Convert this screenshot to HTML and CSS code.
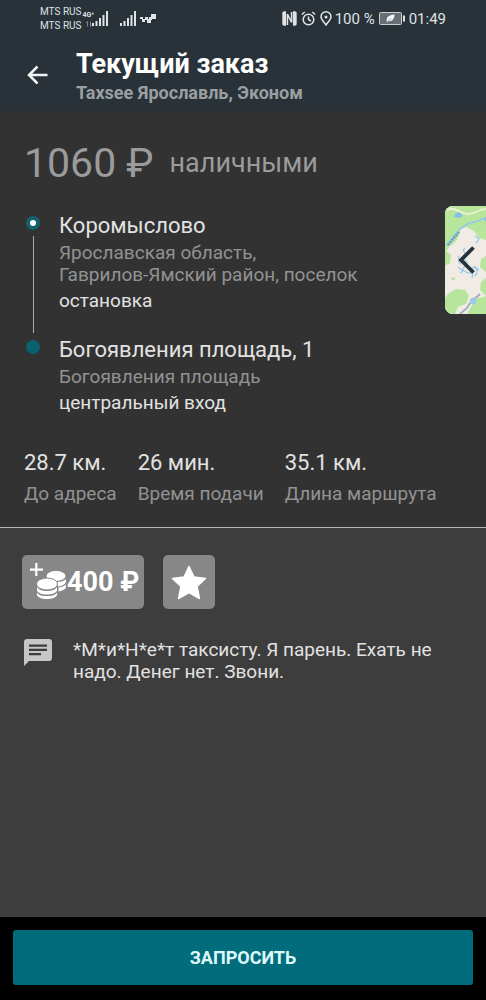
FILE: index.html
```html
<!DOCTYPE html>
<html lang="ru">
<head>
<meta charset="utf-8">
<meta name="viewport" content="width=device-width, initial-scale=1">
<title>Текущий заказ</title>
<link rel="stylesheet" href="styles.css">
</head>
<body>
<div class="app">
  <header class="topbar">
    <div class="status">
      <div class="carriers"><span>MTS RUS</span><span>MTS RUS</span></div>
      <div class="network"><span class="network-type">4G⁺</span>
        <svg class="updown" width="6" height="6" viewBox="0 0 6 6"><path d="M1.5 5.500V.5L.5 2M4.500 .5v5l1-1.500" fill="none" stroke="#7d868a"/></svg>
      </div>
      <svg class="signal" width="16" height="15" viewBox="0 0 16 15"><path d="M0 12h2v3H0zM3.500 10h2v5h-2zM7 7h2v8H7zM10.500 4h2v11h-2zM14 0h2v15h-2z" fill="#dfe3e4"/></svg>
      <svg class="signal signal-second" width="16" height="15" viewBox="0 0 16 15"><path d="M0 12h2v3H0zM3.500 10h2v5h-2zM7 7h2v8H7zM10.500 4h2v11h-2zM14 0h2v15h-2z" fill="#dfe3e4"/></svg>
      <svg class="checks" width="16" height="9" viewBox="0 0 16 9"><path d="M0 3h3v2H0zM2 5h3v3H2zM5 3h3v3H5zM7 5h4v4H7zM11 0h5v5h-5zM9 3h3v3H9z" fill="#dfe3e4"/></svg>
      <div class="status-right">
        <svg width="15" height="15" viewBox="0 0 15 15"><path d="M4 .3H2.500C.8.300.300 1 .300 2.500v10c0 1.500.5 2.200 2.200 2.200H4zM11 .3h1.500c1.700 0 2.200.7 2.200 2.200v10c0 1.500-.5 2.200-2.200 2.200H11z" fill="#dfe3e4"/><path d="M5.400 14V3l4.200 8.500V1" fill="none" stroke="#dfe3e4" stroke-width="1.600"/></svg>
        <svg width="15" height="15" viewBox="0 0 15 15" fill="none" stroke="#dfe3e4" stroke-width="1.500"><circle cx="7.500" cy="8.500" r="5.300"/><path d="M7.500 5.500v3l2.500 1.500M.8 3.500l3-2.500M14.200 3.500l-3-2.500"/></svg>
        <svg width="12" height="15" viewBox="0 0 12 15" fill="none" stroke="#dfe3e4" stroke-width="1.500"><path d="M6 14C3.500 10.500 1 8.500 1 5.800a5 5 0 0 1 10 0C11 8.500 8.500 10.500 6 14z"/><circle cx="6" cy="6" r="1.500" fill="#dfe3e4" stroke="none"/></svg>
        <span class="percent">100 %</span>
        <svg class="battery" width="26" height="13" viewBox="0 0 26 13"><rect x=".5" y=".5" width="22" height="12" rx="1" fill="#667074" stroke="#c9cfd1"/><path d="M24 3.500h2v6h-2z" fill="#dfe3e4"/><path d="M8 10.500C6.500 5.500 9.500 3 15.500 2.500 15.500 7 13 10 9.500 9z" fill="#f4f6f6"/><path d="M8 10.500l4-4" stroke="#667074" stroke-width=".6"/></svg>
        <span>01:49</span>
      </div>
    </div>
    <div class="titlebar">
      <button class="back" type="button" aria-label="Назад">
        <svg width="21" height="20" viewBox="0 0 21 20" fill="none" stroke="#f2f4f4" stroke-width="2.500"><path d="M20.500 10H2.500M10.500 1.500L2 10l8.500 8.500"/></svg>
      </button>
      <div>
        <h1 class="title">Текущий заказ</h1>
        <p class="subtitle">Taxsee Ярославль, Эконом</p>
      </div>
    </div>
  </header>

  <main class="main">
    <section class="details">
      <div class="price"><span class="amount">1060 ₽</span><span class="method">наличными</span></div>
      <ol class="route">
        <li class="stop">
          <div class="track"><span class="dot dot-start"></span><span class="line"></span></div>
          <div class="place">
            <h2 class="place-name">Коромыслово</h2>
            <p class="place-area">Ярославская область,<br>Гаврилов-Ямский район, поселок</p>
            <p class="place-note">остановка</p>
          </div>
        </li>
        <li class="stop">
          <div class="track"><span class="dot"></span></div>
          <div class="place">
            <h2 class="place-name">Богоявления площадь, 1</h2>
            <p class="place-area">Богоявления площадь</p>
            <p class="place-note">центральный вход</p>
          </div>
        </li>
      </ol>
      <dl class="stats">
        <div class="stat"><dt>До адреса</dt><dd>28.7 км.</dd></div>
        <div class="stat"><dt>Время подачи</dt><dd>26 мин.</dd></div>
        <div class="stat"><dt>Длина маршрута</dt><dd>35.1 км.</dd></div>
      </dl>
      <button class="map-tab" type="button" aria-label="Открыть карту">
        <svg width="41" height="108" viewBox="0 0 41 108">
          <rect width="41" height="108" fill="#f0ebe4"/>
          <path d="M0 0h41v34l-7-2-5-7-8-4-5 2-4 11-8 7-4 6zM0 44l6 5-1 8-5 3zM41 50l-5 3-1 8 6 5zM3 88l8-5 9 1 4 6-3 8-8 3-3 7H0V92zM36 76l5-4v18l-6-6zM31 93l10-3v18H22l5-9z" fill="#b7e59c"/>
          <path d="M16 24l9-1 6 8 6 5v10l-8-4-10-4-6-5z" fill="#f0ebe4"/>
          <path d="M6 72l4-1v3H7z" fill="#b7e59c"/>
          <path d="M2 4c8-4 12 3 20 4S34 2 41 3" fill="none" stroke="#e9f2d0" stroke-width="2"/>
          <path d="M10 8l4-2 4 4-4 2-5-1zM38 12l3-1v5z" fill="#83bfe6"/>
          <path d="M1 40l7-9 8-9 8-5 6-1 11-4" fill="none" stroke="#91c7ea" stroke-width="1.500"/>
          <path d="M3 39l11-13" stroke="#699cc0" stroke-width="2.500" stroke-dasharray="2 1"/>
          <path d="M30 30l4 3-3 4M20 42c-5 4 4 5 0 9s5 3 1 8-5 4 0 7 8-2 6 6M13 50c3 4-2 6 3 8M25 63c6-4 9 2 5 7M13 61l5 4-3 2M29 60l5 4" fill="none" stroke="#9bc9e8" stroke-width="1.300"/>
          <path d="M15 108l7-6 3-5 10-9" fill="none" stroke="#9faab8" stroke-width="1.800"/>
          <path d="M25 93l4-2 3 4-3 4-4-2z" fill="#9fc9e8"/>
          <path d="M28.500 41.500L16 54l12.500 12.500" fill="none" stroke="#263238" stroke-width="3.800"/>
        </svg>
      </button>
    </section>

    <section class="extras">
      <div class="badges">
        <button class="badge badge-bonus" type="button">
          <svg width="36" height="38" viewBox="0 0 36 38" fill="#fff">
            <path d="M5.200 0h2.200v5.500H13v2.200H7.400V13H5.200V7.700H0V5.500h5.200z"/>
            <ellipse cx="26" cy="13" rx="9.500" ry="5"/>
            <path d="M27 19c4 0 7.500-1 9-3v3c-1 2.500-4 4-8 4.500zM28.500 24.500c3.500-.5 6-1.500 7.500-3v3c-1 2-4 3.500-7.500 4z"/>
            <ellipse cx="17" cy="21" rx="10.500" ry="6" stroke="#878787"/>
            <path d="M7 24c2 3 5.500 4 10 4s8-1 10-4v3.500c-1 2.500-5 4-10 4s-9-1.500-10-4zM7 29.500c2 3 5.500 3.500 10 3.500s8-.5 10-3.500V32c-1 2.500-5 4-10 4S8 34.500 7 32z"/>
          </svg>
          <span>400 ₽</span>
        </button>
        <button class="badge badge-star" type="button" aria-label="В избранное">
          <svg width="36" height="35" viewBox="0 0 36 35"><path d="M18 1.500l5 10.500 11.500 1.500-8.500 8 2.500 12L18 27.500 7.500 33.500l2.500-12-8.500-8L13 12z" fill="#fff" stroke="#fff" stroke-width="1.500" stroke-linejoin="round"/></svg>
        </button>
      </div>
      <div class="comment">
        <svg class="comment-icon" width="28" height="28" viewBox="0 0 28 28"><path d="M3 0h22a3 3 0 0 1 3 3v16a3 3 0 0 1-3 3H5l-5 5V3a3 3 0 0 1 3-3z" fill="#c6c6c6"/><path d="M5 5.500h18v2.300H5zM5 9.700h18V12H5zM5 14h12v2.300H5z" fill="#3d3d3d"/></svg>
        <p class="comment-text">*М*и*Н*е*т таксисту. Я парень. Ехать не надо. Денег нет. Звони.</p>
      </div>
    </section>
  </main>

  <footer class="footer"><button class="submit" type="button">ЗАПРОСИТЬ</button></footer>
</div>
</body>
</html>
```
FILE: styles.css
```css
* { box-sizing: border-box; }
body, h1, h2, p, ol, dl, dd { margin: 0; }
body { background: #000; font-family: Roboto, "Noto Sans", sans-serif; color: #e2e2e2; }
button { border: 0; padding: 0; font: inherit; color: inherit; cursor: pointer; }
svg { display: block; flex: none; }
.app { min-height: 100vh; display: flex; flex-direction: column; }

.topbar { background: #283238; height: 112px; border-bottom: 2px solid #2c3235; }
.status { display: flex; align-items: center; height: 37px; padding: 0 40px; color: #dfe3e4; }
.carriers { display: flex; flex-direction: column; font-size: 10px; line-height: 14px; white-space: nowrap; }
.network { display: flex; flex-direction: column; align-items: flex-start; gap: 1px; width: 10px; margin-left: 1px; font-size: 7px; line-height: 9px; font-weight: 700; }
.network-type { white-space: nowrap; }
.updown { align-self: flex-end; }
.signal-second { margin-left: 12px; }
.checks { margin-left: 4px; }
.status-right { display: flex; align-items: center; gap: 4px; margin-left: auto; font-size: 15px; line-height: 18px; white-space: nowrap; }
.percent { margin-left: -1px; }
.titlebar { display: flex; align-items: center; gap: 28px; padding: 9px 27px; }
.back { background: none; }
.title { font-size: 27px; line-height: 36px; font-weight: 700; color: #fff; }
.subtitle { font-size: 18px; line-height: 22px; font-weight: 700; color: #9b9fa2; }

.main { flex: 1; display: flex; flex-direction: column; background: #3d3d3d; }
.details { position: relative; padding: 24px 24px 22px; background: #323232; border-bottom: 1px solid #b5b5b5; }
.price { display: flex; align-items: center; gap: 16px; color: #9b9b9b; }
.amount { font-size: 41px; line-height: 54px; }
.method { font-size: 27px; line-height: 54px; }
.route { list-style: none; padding: 23px 0 0; }
.stop { display: flex; gap: 19px; }
.stop:first-child { min-height: 124px; }
.track { display: flex; flex-direction: column; align-items: center; width: 14px; margin-left: 2px; padding: 3px 0 4px; gap: 6px; }
.dot { flex: none; width: 14px; height: 14px; border-radius: 50%; background: #09606e; }
.dot-start { background: #fff; border: 4px solid #14606c; }
.line { flex: 1; width: 1px; background: #aaa; }
.place-name { font-size: 22px; line-height: 26px; font-weight: 400; }
.place-area { font-size: 19px; line-height: 22px; padding-top: 3px; color: #929292; }
.place-note { font-size: 19px; line-height: 22px; padding-top: 4px; }
.stats { display: flex; gap: 21px; padding-top: 36px; }
.stat { display: flex; flex-direction: column-reverse; gap: 7px; white-space: nowrap; }
.stat dt { font-size: 19px; line-height: 22px; color: #929292; }
.stat dd { font-size: 22px; line-height: 26px; }
.map-tab { position: absolute; top: 94px; right: 0; overflow: hidden; border-radius: 8px 0 0 8px; }

.extras { padding: 27px 22px; }
.badges { display: flex; gap: 19px; }
.badge { display: flex; align-items: center; height: 54px; border-radius: 5px; background: #878787; color: #fff; }
.badge-bonus { padding: 0 5px 0 8px; gap: 1px; font-size: 27px; font-weight: 700; }
.badge-star { justify-content: center; width: 52px; }
.comment { display: flex; gap: 21px; padding: 30px 2px; }
.comment-text { font-size: 19px; line-height: 22px; }

.footer { padding: 13px 13px 15px; background: #000; }
.submit { width: 100%; height: 55px; border-radius: 3px; background: #006c7c; color: #dff8fa; font-size: 18px; font-weight: 700; }
```
